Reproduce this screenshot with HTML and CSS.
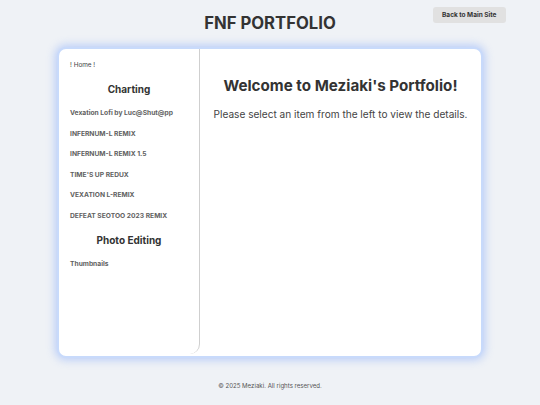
FILE: index.html
```html
<!DOCTYPE html>
<html lang="en">
<head>
<meta charset="utf-8">
<title>FNF Portfolio</title>
<link rel="stylesheet" href="styles.css">
</head>
<body>
  <header class="site-header">
    <span class="header-spacer"></span>
    <h1 class="site-title">FNF PORTFOLIO</h1>
    <a class="back-btn" href="#">Back to Main Site</a>
  </header>

  <main class="portfolio-card">
    <nav class="sidebar">
      <a class="nav-item home-link" href="#">! Home !</a>
      <h2 class="nav-heading">Charting</h2>
      <a class="nav-item" href="#">Vexation Lofi by Luc@Shut@pp</a>
      <a class="nav-item" href="#">INFERNUM-L REMIX</a>
      <a class="nav-item" href="#">INFERNUM-L REMIX 1.5</a>
      <a class="nav-item" href="#">TIME'S UP REDUX</a>
      <a class="nav-item" href="#">VEXATION L-REMIX</a>
      <a class="nav-item" href="#">DEFEAT SEOTOO 2023 REMIX</a>
      <h2 class="nav-heading">Photo Editing</h2>
      <a class="nav-item" href="#">Thumbnails</a>
    </nav>
    <section class="content">
      <h2 class="welcome">Welcome to Meziaki's Portfolio!</h2>
      <p class="intro">Please select an item from the left to view the details.</p>
    </section>
  </main>

  <footer class="site-footer">© 2025 Meziaki. All rights reserved.</footer>
</body>
</html>
```

FILE: styles.css
```css
* {
  box-sizing: border-box;
}

body {
  margin: 0;
  background: #eff2f6;
  font-family: Inter, "Noto Sans", sans-serif;
  color: #333;
  width: 540px;
  height: 405px;
  overflow: hidden;
}

/* header: title centered, button pinned to the right column */
.site-header {
  display: grid;
  grid-template-columns: 1fr auto 1fr;
  align-items: start;
  height: 47px;
}

.site-title {
  margin: 12px 0 0;
  font-size: 16.7px;
  font-weight: 700;
  line-height: 22px;
  color: #333;
}

.back-btn {
  justify-self: end;
  margin: 7px 34px 0 0;
  height: 16px;
  padding: 0 9.5px;
  display: flex;
  align-items: center;
  background: #e1e1e1;
  border-radius: 3px;
  font-size: 6.5px;
  font-weight: 700;
  color: #333;
  text-decoration: none;
}

/* main card */
.portfolio-card {
  margin: 0 0 0 57px;
  width: 426px;
  height: 311px;
  display: flex;
  background: #fff;
  border: 2px solid #c8dafb;
  border-radius: 9px;
  box-shadow: 0 0 8px 2px rgba(120, 160, 250, 0.45);
}

.sidebar {
  width: 141px;
  height: 305px;
  flex-shrink: 0;
  display: flex;
  flex-direction: column;
  padding: 5.7px 0 0 11px;
  border-right: 1px solid #cfcfcf;
  border-bottom-right-radius: 10px;
}

.nav-item {
  display: flex;
  align-items: center;
  height: 20.6px;
  font-size: 6.7px;
  font-weight: 700;
  color: #616161;
  text-decoration: none;
  white-space: nowrap;
}

.home-link {
  font-size: 6.4px;
  font-weight: 400;
  color: #444;
}

.nav-heading {
  margin: 0 0 0 -11px;
  height: 27.4px;
  display: flex;
  align-items: center;
  justify-content: center;
  font-size: 10px;
  font-weight: 700;
  color: #333;
}

.content {
  flex: 1;
  display: flex;
  flex-direction: column;
  align-items: center;
  padding-top: 27px;
}

.welcome {
  margin: 0;
  font-size: 15.2px;
  line-height: 20px;
  font-weight: 700;
  color: #333;
}

.intro {
  margin: 11px 0 0;
  font-size: 10.1px;
  line-height: 14px;
  color: #444;
}

.site-footer {
  margin-top: 24px;
  text-align: center;
  font-size: 6.1px;
  color: #555;
}
```
